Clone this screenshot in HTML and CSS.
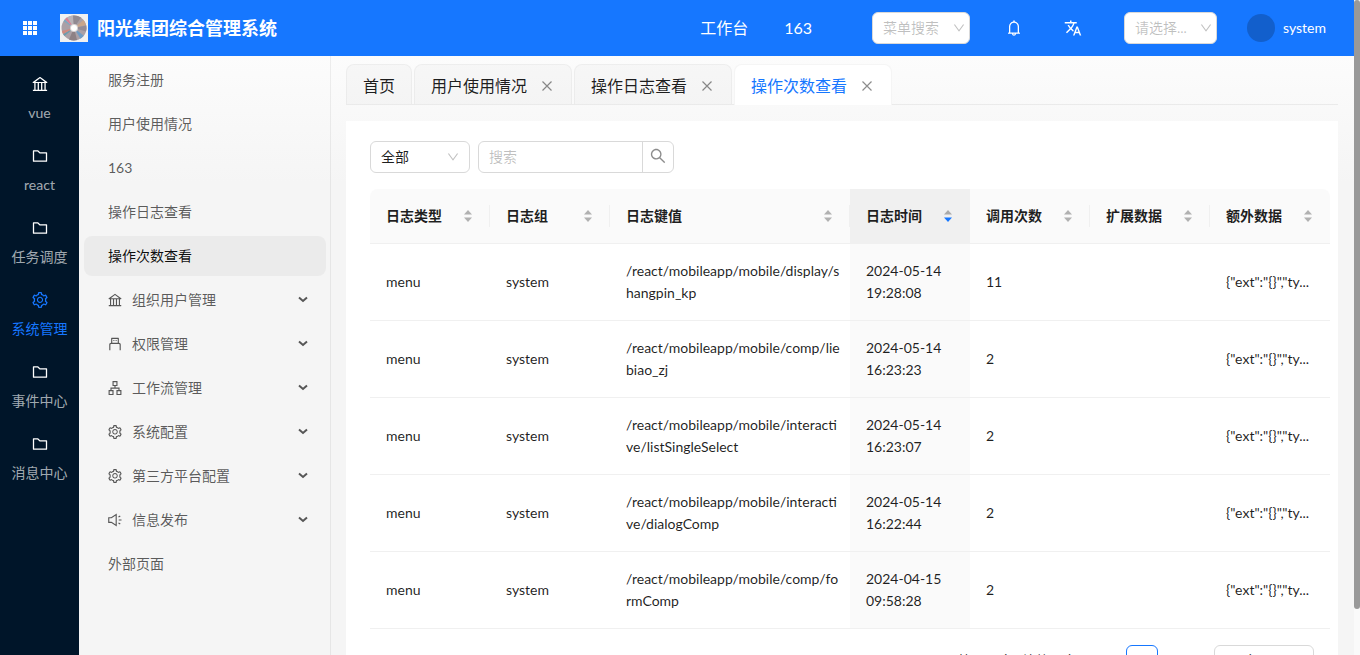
FILE: index.html
```html
<!DOCTYPE html>
<html lang="zh-CN">
<head>
    <meta charset="UTF-8">
    <meta name="viewport" content="width=device-width, initial-scale=1.0">
    <title>阳光集团综合管理系统</title>
    <link rel="stylesheet" href="styles.css">
</head>
<body>
    <svg class="sprite" aria-hidden="true">
        <symbol id="i-bank" viewBox="64 64 896 896"><path d="M894 462c30.9 0 43.8-39.7 18.7-58L530.8 126.2a31.81 31.81 0 00-37.6 0L111.3 404c-25.1 18.2-12.2 58 18.8 58H192v374h-72c-4.4 0-8 3.6-8 8v52c0 4.4 3.6 8 8 8h784c4.4 0 8-3.6 8-8v-52c0-4.4-3.6-8-8-8h-72V462h62zM512 196.7l271.1 197.2H240.9L512 196.7zM264 462h117v374H264V462zm189 0h117v374H453V462zm307 374H642V462h118v374z"/></symbol>
        <symbol id="i-folder" viewBox="64 64 896 896"><path d="M880 298.4H521L403.7 186.2a8.15 8.15 0 00-5.5-2.2H144c-17.7 0-32 14.3-32 32v592c0 17.7 14.3 32 32 32h736c17.7 0 32-14.3 32-32V330.4c0-17.7-14.3-32-32-32zM840 768H184V256h188.5l119.6 114.4H840V768z"/></symbol>
        <symbol id="i-setting" viewBox="64 64 896 896"><path d="M924.8 625.7l-65.5-56c3.1-19 4.7-38.4 4.7-57.8s-1.6-38.8-4.7-57.8l65.5-56a32.03 32.03 0 009.3-35.2l-.9-2.6a443.74 443.74 0 00-79.7-137.9l-1.8-2.1a32.12 32.12 0 00-35.1-9.5l-81.3 28.9c-30-24.6-63.5-44-99.7-57.6l-15.7-85a32.05 32.05 0 00-25.8-25.7l-2.7-.5c-52.1-9.4-106.9-9.4-159 0l-2.7.5a32.05 32.05 0 00-25.8 25.7l-15.8 85.4a351.86 351.86 0 00-99 57.4l-81.9-29.1a32 32 0 00-35.1 9.5l-1.8 2.1a446.02 446.02 0 00-79.7 137.9l-.9 2.6c-4.5 12.5-.8 26.5 9.3 35.2l66.3 56.6c-3.1 18.8-4.6 38-4.6 57.1 0 19.2 1.5 38.4 4.6 57.1L99 625.5a32.03 32.03 0 00-9.3 35.2l.9 2.6c18.1 50.4 44.9 96.9 79.7 137.9l1.8 2.1a32.12 32.12 0 0035.1 9.5l81.9-29.1c29.8 24.5 63.1 43.9 99 57.4l15.8 85.4a32.05 32.05 0 0025.8 25.7l2.7.5a449.4 449.4 0 00159 0l2.7-.5a32.05 32.05 0 0025.8-25.7l15.7-85a350 350 0 0099.7-57.6l81.3 28.9a32 32 0 0035.1-9.5l1.8-2.1c34.8-41.1 61.6-87.5 79.7-137.9l.9-2.6c4.5-12.3.8-26.3-9.3-35zM788.3 465.9c2.5 15.1 3.8 30.6 3.8 46.1s-1.3 31-3.8 46.1l-6.6 40.1 74.7 63.9a370.03 370.03 0 01-42.6 73.6L721 702.8l-31.4 25.8c-23.9 19.6-50.5 35-79.3 45.8l-38.1 14.3-17.9 97a377.5 377.5 0 01-85 0l-17.9-97.2-37.8-14.5c-28.5-10.8-55-26.2-78.7-45.7l-31.4-25.9-93.4 33.2c-17-22.9-31.2-47.6-42.6-73.6l75.5-64.5-6.5-40c-2.4-14.9-3.7-30.3-3.7-45.5 0-15.3 1.2-30.6 3.7-45.5l6.5-40-75.5-64.5c11.3-26.1 25.6-50.7 42.6-73.6l93.4 33.2 31.4-25.9c23.7-19.5 50.2-34.9 78.7-45.7l37.9-14.3 17.9-97.2c28.1-3.2 56.8-3.2 85 0l17.9 97 38.1 14.3c28.7 10.8 55.4 26.2 79.3 45.8l31.4 25.8 92.8-32.9c17 22.9 31.2 47.6 42.6 73.6L781.8 426l6.5 39.9zM512 326c-97.2 0-176 78.8-176 176s78.8 176 176 176 176-78.8 176-176-78.8-176-176-176zm79.2 255.2A111.6 111.6 0 01512 614c-29.9 0-58-11.7-79.2-32.8A111.6 111.6 0 01400 502c0-29.9 11.7-58 32.8-79.2C454 401.6 482.1 390 512 390c29.9 0 58 11.6 79.2 32.8A111.6 111.6 0 01624 502c0 29.9-11.7 58-32.8 79.2z"/></symbol>
        <symbol id="i-usb" viewBox="64 64 896 896"><path d="M760 432V144c0-17.700-14.300-32-32-32H296c-17.700 0-32 14.300-32 32v288c-66.200 0-120 52.100-120 116v356c0 4.400 3.600 8 8 8h56c4.400 0 8-3.600 8-8V548c0-24.300 21.600-44 48.100-44h495.800c26.500 0 48.100 19.700 48.100 44v356c0 4.400 3.600 8 8 8h56c4.400 0 8-3.600 8-8V548c0-63.900-53.800-116-120-116zM336 184h352v248H336zM408 256h64v56h-64zM552 256h64v56h-64z" fill-rule="evenodd"/></symbol>
        <symbol id="i-apartment" viewBox="64 64 896 896"><path d="M908 640H804V488c0-4.400-3.600-8-8-8H548v-96h108c8.800 0 16-7.200 16-16V80c0-8.800-7.200-16-16-16H368c-8.800 0-16 7.200-16 16v288c0 8.800 7.200 16 16 16h108v96H228c-4.400 0-8 3.600-8 8v152H116c-8.800 0-16 7.200-16 16v288c0 8.800 7.200 16 16 16h288c8.800 0 16-7.200 16-16V656c0-8.800-7.200-16-16-16H292v-88h440v88H620c-8.800 0-16 7.200-16 16v288c0 8.800 7.200 16 16 16h288c8.800 0 16-7.200 16-16V656c0-8.800-7.200-16-16-16zM424 312V136h176v176zM348 712v176H172V712zM852 888H676V712h176z" fill-rule="evenodd"/></symbol>
        <symbol id="i-sound" viewBox="64 64 896 896"><g fill="none" stroke="currentColor" stroke-width="72"><path d="M112 364h168l308-204v704L280 660H112z"/><path d="M752 512h176M736 318l112-66M736 706l112 66"/></g></symbol>
        <symbol id="i-down" viewBox="64 64 896 896"><path d="M884 256h-75c-5.100 0-9.900 2.500-12.900 6.600L512 654.200 227.900 262.600c-3-4.100-7.800-6.600-12.900-6.600h-75c-6.500 0-10.300 7.400-6.500 12.700l352.600 486.100c12.800 17.600 39 17.600 51.700 0l352.600-486.100c3.900-5.300.1-12.700-6.400-12.700z"/></symbol>
        <symbol id="i-arrow" viewBox="0 0 10 10"><path d="M1 2.500l4 3.500 4-3.500" fill="none" stroke="currentColor" stroke-width="2"/></symbol>
        <symbol id="i-close" viewBox="0 0 12 12"><path d="M1.500 1.500l9 9M10.500 1.500l-9 9" fill="none" stroke="currentColor" stroke-width="1.200"/></symbol>
        <symbol id="i-left" viewBox="0 0 12 12"><path d="M8.500 1.500L3.500 6l5 4.500" fill="none" stroke="currentColor"/></symbol>
        <symbol id="i-right" viewBox="0 0 12 12"><path d="M3.500 1.500l5 4.500-5 4.500" fill="none" stroke="currentColor"/></symbol>
        <symbol id="i-search" viewBox="64 64 896 896"><path d="M909.6 854.5L649.9 594.8C690.2 542.7 712 479 712 412c0-80.2-31.3-155.4-87.9-212.1-56.6-56.7-132-87.9-212.1-87.9s-155.5 31.3-212.1 87.9C143.2 256.5 112 331.8 112 412c0 80.1 31.3 155.5 87.9 212.1C256.5 680.8 331.8 712 412 712c67 0 130.6-21.8 182.7-62l259.7 259.6a8.2 8.2 0 0011.6 0l43.6-43.5a8.2 8.2 0 000-11.6zM570.4 570.4C528 612.7 471.8 636 412 636s-116-23.3-158.4-65.6C211.3 528 188 471.8 188 412s23.3-116.1 65.6-158.4C296 211.3 352.2 188 412 188s116.1 23.2 158.4 65.6S636 352.2 636 412s-23.3 116.1-65.6 158.4z"/></symbol>
        <symbol id="i-bell" viewBox="64 64 896 896"><path d="M816 768h-24V428c0-141.100-104.300-257.800-240-277.200V112c0-22.100-17.900-40-40-40s-40 17.900-40 40v38.800C336.300 170.200 232 286.900 232 428v340h-24c-17.700 0-32 14.300-32 32v32c0 4.400 3.600 8 8 8h216c0 61.800 50.200 112 112 112s112-50.200 112-112h216c4.400 0 8-3.600 8-8v-32c0-17.700-14.300-32-32-32zM512 888c-26.500 0-48-21.500-48-48h96c0 26.500-21.500 48-48 48zM304 768V428c0-55.600 21.600-107.800 60.900-147.100S456.400 220 512 220c55.600 0 107.800 21.600 147.100 60.900S720 372.400 720 428v340H304z"/></symbol>
        <symbol id="i-translate" viewBox="0 0 24 24"><path d="M12.870 15.070l-2.540-2.510.03-.03c1.740-1.940 2.980-4.170 3.710-6.530H17V4h-7V2H8v2H1v1.990h11.170C11.500 7.920 10.440 9.750 9 11.350 8.070 10.320 7.300 9.190 6.690 8h-2c.73 1.630 1.730 3.170 2.980 4.560l-5.090 5.020L4 19l5-5 3.110 3.110.76-2.040zM18.500 10h-2L12 22h2l1.120-3h4.750L21 22h2l-4.500-12zm-2.620 7l1.620-4.330L19.120 17h-3.240z"/></symbol>
        <symbol id="i-grid" viewBox="0 0 14 14"><path d="M0 0h4v4H0zM5 0h4v4H5zM10 0h4v4h-4zM0 5h4v4H0zM5 5h4v4H5zM10 5h4v4h-4zM0 10h4v4H0zM5 10h4v4H5zM10 10h4v4h-4z"/></symbol>
        <symbol id="i-sort" viewBox="0 0 12 14"><path class="sort-up" d="M2 5.500L6 1l4 4.500z"/><path class="sort-down" d="M2 8.500h8L6 13z"/></symbol>
    </svg>

    <div class="page">
        <div class="layout">
            <header class="header">
                <button class="icon-button" type="button" aria-label="应用"><svg class="icon icon-14"><use href="#i-grid"/></svg></button>
                <svg class="logo" viewBox="0 0 28 28">
                    <path fill="#f1f1f1" d="M0 0h28v28H0z"/>
                    <circle cx="14" cy="14" r="12.500" fill="#aaa0a6"/>
                    <path fill="#b9b3b8" d="M14 14L4 6.500A12.500 12.500 0 0 1 13 1.500z"/>
                    <path fill="#918a92" d="M14 14l-1-12.500a12.500 12.500 0 0 1 8 2z"/>
                    <path fill="#7fa8bf" d="M14 14L3.500 7.200A12.500 12.500 0 0 1 5 5.300z"/>
                    <path fill="#d97f95" d="M14 14L5 5.300A12.500 12.500 0 0 1 7 3.600z"/>
                    <path fill="#c9a58b" d="M14 14l9.500-8a12.500 12.500 0 0 1 2.500 5z"/>
                    <path fill="#948c96" d="M14 14l12.300-2.500a12.500 12.500 0 0 1-.3 6z"/>
                    <path fill="#6f9cc4" d="M14 14l9.800 7.800a12.500 12.500 0 0 1-3.300 2.900z"/>
                    <path fill="#8d8185" d="M14 14l3 12.100a12.500 12.500 0 0 1-8-.6z"/>
                    <path fill="#6b9cae" d="M14 14L4.500 22a12.500 12.500 0 0 1-1.400-2z"/>
                    <path fill="#d08a80" d="M14 14L3.100 20a12.500 12.500 0 0 1-1.200-3z"/>
                    <circle cx="14" cy="14" r="4" fill="#d8d4d4"/>
                    <circle cx="14" cy="14" r="3" fill="#fff"/>
                </svg>
                <h1 class="title">阳光集团综合管理系统</h1>
                <nav class="header-nav">
                    <a href="#">工作台</a>
                    <a href="#">163</a>
                </nav>
                <div class="select menu-search">
                    <select class="placeholder" aria-label="菜单搜索"><option>菜单搜索</option></select>
                    <svg class="icon select-arrow"><use href="#i-down"/></svg>
                </div>
                <button class="icon-button bell" type="button" aria-label="通知"><svg class="icon icon-16"><use href="#i-bell"/></svg></button>
                <button class="icon-button translate" type="button" aria-label="语言"><svg class="icon icon-18"><use href="#i-translate"/></svg></button>
                <div class="select role-select">
                    <select class="placeholder" aria-label="请选择"><option>请选择...</option></select>
                    <svg class="icon select-arrow"><use href="#i-down"/></svg>
                </div>
                <div class="user">
                    <span class="avatar"></span>
                    <span>system</span>
                </div>
            </header>

            <div class="body">
                <nav class="rail">
                    <a class="rail-item" href="#"><svg class="icon icon-16"><use href="#i-bank"/></svg><span>vue</span></a>
                    <a class="rail-item" href="#"><svg class="icon icon-16"><use href="#i-folder"/></svg><span>react</span></a>
                    <a class="rail-item" href="#"><svg class="icon icon-16"><use href="#i-folder"/></svg><span>任务调度</span></a>
                    <a class="rail-item active" href="#"><svg class="icon icon-16"><use href="#i-setting"/></svg><span>系统管理</span></a>
                    <a class="rail-item" href="#"><svg class="icon icon-16"><use href="#i-folder"/></svg><span>事件中心</span></a>
                    <a class="rail-item" href="#"><svg class="icon icon-16"><use href="#i-folder"/></svg><span>消息中心</span></a>
                </nav>

                <nav class="sidebar">
                    <a class="menu-item" href="#">服务注册</a>
                    <a class="menu-item" href="#">用户使用情况</a>
                    <a class="menu-item" href="#">163</a>
                    <a class="menu-item" href="#">操作日志查看</a>
                    <a class="menu-item active" href="#">操作次数查看</a>
                    <a class="menu-item" href="#"><svg class="icon icon-14"><use href="#i-bank"/></svg>组织用户管理<svg class="icon menu-arrow"><use href="#i-arrow"/></svg></a>
                    <a class="menu-item" href="#"><svg class="icon icon-14"><use href="#i-usb"/></svg>权限管理<svg class="icon menu-arrow"><use href="#i-arrow"/></svg></a>
                    <a class="menu-item" href="#"><svg class="icon icon-14"><use href="#i-apartment"/></svg>工作流管理<svg class="icon menu-arrow"><use href="#i-arrow"/></svg></a>
                    <a class="menu-item" href="#"><svg class="icon icon-14"><use href="#i-setting"/></svg>系统配置<svg class="icon menu-arrow"><use href="#i-arrow"/></svg></a>
                    <a class="menu-item" href="#"><svg class="icon icon-14"><use href="#i-setting"/></svg>第三方平台配置<svg class="icon menu-arrow"><use href="#i-arrow"/></svg></a>
                    <a class="menu-item" href="#"><svg class="icon icon-14"><use href="#i-sound"/></svg>信息发布<svg class="icon menu-arrow"><use href="#i-arrow"/></svg></a>
                    <a class="menu-item" href="#">外部页面</a>
                </nav>

                <main class="main">
                    <div class="tabs">
                        <div class="tab"><a href="#">首页</a></div>
                        <div class="tab"><a href="#">用户使用情况</a><button class="tab-close" type="button" aria-label="关闭"><svg class="icon"><use href="#i-close"/></svg></button></div>
                        <div class="tab"><a href="#">操作日志查看</a><button class="tab-close" type="button" aria-label="关闭"><svg class="icon"><use href="#i-close"/></svg></button></div>
                        <div class="tab active"><a href="#">操作次数查看</a><button class="tab-close" type="button" aria-label="关闭"><svg class="icon"><use href="#i-close"/></svg></button></div>
                    </div>

                    <section class="card">
                        <form class="toolbar">
                            <div class="select type-select">
                                <select aria-label="类型"><option>全部</option></select>
                                <svg class="icon select-arrow"><use href="#i-down"/></svg>
                            </div>
                            <div class="search">
                                <input type="text" placeholder="搜索" aria-label="搜索">
                                <button type="button" aria-label="搜索"><svg class="icon icon-16"><use href="#i-search"/></svg></button>
                            </div>
                        </form>

                        <table class="table">
                            <colgroup>
                                <col><col><col class="col-wide"><col><col><col><col>
                            </colgroup>
                            <thead>
                                <tr>
                                    <th><div class="th-inner">日志类型<svg class="icon sorter"><use href="#i-sort"/></svg></div></th>
                                    <th><div class="th-inner">日志组<svg class="icon sorter"><use href="#i-sort"/></svg></div></th>
                                    <th><div class="th-inner">日志键值<svg class="icon sorter"><use href="#i-sort"/></svg></div></th>
                                    <th class="sorted"><div class="th-inner">日志时间<svg class="icon sorter sorter-desc"><use href="#i-sort"/></svg></div></th>
                                    <th><div class="th-inner">调用次数<svg class="icon sorter"><use href="#i-sort"/></svg></div></th>
                                    <th><div class="th-inner">扩展数据<svg class="icon sorter"><use href="#i-sort"/></svg></div></th>
                                    <th><div class="th-inner">额外数据<svg class="icon sorter"><use href="#i-sort"/></svg></div></th>
                                </tr>
                            </thead>
                            <tbody>
                                <tr>
                                    <td>menu</td>
                                    <td>system</td>
                                    <td class="path">/react/mobileapp/mobile/display/shangpin_kp</td>
                                    <td class="sorted">2024-05-14 19:28:08</td>
                                    <td>11</td>
                                    <td></td>
                                    <td class="ellipsis">{"ext":"{}","ty...</td>
                                </tr>
                                <tr>
                                    <td>menu</td>
                                    <td>system</td>
                                    <td class="path">/react/mobileapp/mobile/comp/liebiao_zj</td>
                                    <td class="sorted">2024-05-14 16:23:23</td>
                                    <td>2</td>
                                    <td></td>
                                    <td class="ellipsis">{"ext":"{}","ty...</td>
                                </tr>
                                <tr>
                                    <td>menu</td>
                                    <td>system</td>
                                    <td class="path">/react/mobileapp/mobile/interactive/listSingleSelect</td>
                                    <td class="sorted">2024-05-14 16:23:07</td>
                                    <td>2</td>
                                    <td></td>
                                    <td class="ellipsis">{"ext":"{}","ty...</td>
                                </tr>
                                <tr>
                                    <td>menu</td>
                                    <td>system</td>
                                    <td class="path">/react/mobileapp/mobile/interactive/dialogComp</td>
                                    <td class="sorted">2024-05-14 16:22:44</td>
                                    <td>2</td>
                                    <td></td>
                                    <td class="ellipsis">{"ext":"{}","ty...</td>
                                </tr>
                                <tr>
                                    <td>menu</td>
                                    <td>system</td>
                                    <td class="path">/react/mobileapp/mobile/comp/formComp</td>
                                    <td class="sorted">2024-04-15 09:58:28</td>
                                    <td>2</td>
                                    <td></td>
                                    <td class="ellipsis">{"ext":"{}","ty...</td>
                                </tr>
                            </tbody>
                        </table>

                        <div class="pagination">
                            <span class="total">第 1-5 条/总共 5 条</span>
                            <button class="page-button" type="button" aria-label="上一页"><svg class="icon"><use href="#i-left"/></svg></button>
                            <button class="page-button current" type="button">1</button>
                            <button class="page-button" type="button" aria-label="下一页"><svg class="icon"><use href="#i-right"/></svg></button>
                            <div class="select size-select">
                                <select aria-label="每页条数"><option>20 条/页</option></select>
                            </div>
                        </div>
                    </section>
                </main>
            </div>
        </div>
        <div class="scrollbar"><div class="scrollbar-thumb"></div></div>
    </div>
</body>
</html>
```
FILE: styles.css
```css
* {
    margin: 0;
    padding: 0;
    box-sizing: border-box;
}

body {
    font-family: Lato, "Noto Sans CJK SC", sans-serif;
    font-size: 14px;
    line-height: 22px;
    color: rgba(0, 0, 0, 0.88);
    background: linear-gradient(#fff, #f5f5f5 28%);
}

a {
    color: inherit;
    text-decoration: none;
}

button,
input,
select {
    font: inherit;
    color: inherit;
    border: none;
    background: none;
    outline: none;
}

.sprite {
    position: absolute;
    width: 0;
    height: 0;
}

.icon {
    display: block;
    flex: none;
    width: 12px;
    height: 12px;
    fill: currentColor;
}

.icon-14 {
    width: 14px;
    height: 14px;
}

.icon-16 {
    width: 16px;
    height: 16px;
}

.icon-18 {
    width: 18px;
    height: 18px;
}

.page {
    display: flex;
    height: 100vh;
    overflow: hidden;
}

.layout {
    flex: 1;
    min-width: 0;
    display: flex;
    flex-direction: column;
}

.scrollbar {
    flex: none;
    width: 6px;
    background: #fafafa;
}

.scrollbar-thumb {
    height: 93%;
    border-radius: 3px;
    background: #999;
}

/* header */
.header {
    flex: none;
    display: flex;
    align-items: center;
    height: 56px;
    padding: 0 28px 0 23px;
    background: #1677ff;
    color: #fff;
}

.icon-button {
    display: flex;
}

.logo {
    width: 28px;
    height: 28px;
    margin: 0 9px 0 23px;
}

.title {
    flex: 1;
    font-size: 18px;
    font-weight: 700;
    line-height: 28px;
}

.header-nav {
    display: flex;
    gap: 36px;
    margin-right: 60px;
    font-size: 16px;
}

.select {
    position: relative;
    height: 32px;
}

.select select {
    width: 100%;
    height: 100%;
    padding: 0 11px 0 10px;
    border: 1px solid #d9d9d9;
    border-radius: 6px;
    background: #fff;
    color: rgba(0, 0, 0, 0.88);
    appearance: none;
}

.select .placeholder {
    color: rgba(0, 0, 0, 0.25);
}

.select-arrow {
    position: absolute;
    top: 10px;
    right: 11px;
    color: rgba(0, 0, 0, 0.25);
    pointer-events: none;
}

.header .select-arrow {
    right: 5px;
}

.menu-search {
    width: 98px;
}

.bell {
    margin-left: 36px;
}

.translate {
    margin: 0 42px;
}

.role-select {
    width: 93px;
}

.user {
    display: flex;
    align-items: center;
    gap: 8px;
    margin-left: 30px;
}

.avatar {
    width: 28px;
    height: 28px;
    border-radius: 50%;
    background: #125fcc;
}

/* left navigation */
.body {
    flex: 1;
    display: flex;
    min-height: 0;
}

.rail {
    flex: none;
    width: 79px;
    padding-top: 20px;
    background: #001529;
}

.rail-item {
    display: flex;
    flex-direction: column;
    align-items: center;
    gap: 10px;
    height: 72px;
    color: rgba(255, 255, 255, 0.65);
}

.rail-item .icon {
    color: #fff;
}

.rail-item.active,
.rail-item.active .icon {
    color: #1677ff;
}

.sidebar {
    flex: none;
    display: flex;
    flex-direction: column;
    gap: 4px;
    width: 252px;
    padding: 4px 4px 0 5px;
    border-right: 1px solid rgba(5, 5, 5, 0.06);
}

.menu-item {
    flex: none;
    display: flex;
    align-items: center;
    gap: 10px;
    height: 40px;
    padding: 0 18px 0 24px;
    border-radius: 8px;
    color: rgba(0, 0, 0, 0.65);
}

.menu-item.active {
    background: rgba(0, 0, 0, 0.04);
    color: rgba(0, 0, 0, 0.95);
}

.menu-arrow {
    width: 10px;
    height: 10px;
    margin-left: auto;
}

/* page tabs */
.main {
    flex: 1;
    min-width: 0;
    padding: 8px 16px 0 15px;
    overflow: hidden;
}

.tabs {
    display: flex;
    gap: 2px;
    height: 41px;
    margin-bottom: 16px;
    border-bottom: 1px solid rgba(5, 5, 5, 0.06);
    font-size: 16px;
}

.tab {
    display: flex;
    align-items: center;
    padding: 2px 16px 0;
    border: 1px solid rgba(5, 5, 5, 0.04);
    border-bottom: none;
    border-radius: 8px 8px 0 0;
    background: rgba(0, 0, 0, 0.02);
}

.tab.active {
    height: 41px;
    background: #fff;
    color: #1677ff;
}

.tab-close {
    display: flex;
    justify-content: center;
    width: 24px;
    margin: 0 -4px 0 8px;
    color: rgba(0, 0, 0, 0.45);
}

/* content */
.card {
    padding: 20px 8px 24px 24px;
    background: #fff;
}

.toolbar {
    display: flex;
    gap: 8px;
    margin-bottom: 16px;
}

.type-select {
    width: 100px;
}

.search {
    display: flex;
    width: 196px;
    height: 32px;
    border: 1px solid #d9d9d9;
    border-radius: 6px;
}

.search input {
    flex: 1;
    min-width: 0;
    padding: 0 11px 0 10px;
}

.search input::placeholder {
    color: rgba(0, 0, 0, 0.25);
}

.search button {
    display: flex;
    justify-content: center;
    width: 31px;
    padding-top: 6px;
    border-left: 1px solid #d9d9d9;
    color: rgba(0, 0, 0, 0.45);
}

.table {
    width: 100%;
    table-layout: fixed;
    border-collapse: separate;
    border-spacing: 0;
}

.col-wide {
    width: 25%;
}

.table th,
.table td {
    padding: 16px;
    border-bottom: 1px solid #f0f0f0;
    text-align: left;
}

.table .path {
    padding-right: 8px;
    word-break: break-all;
}

.table th {
    position: relative;
    background: #fafafa;
    font-weight: 600;
}

.table th:first-child {
    border-top-left-radius: 8px;
}

.table th:last-child {
    border-top-right-radius: 8px;
}

.table th:not(:last-child)::after {
    content: '';
    position: absolute;
    top: 16px;
    right: 0;
    width: 1px;
    height: 22px;
    background: #f0f0f0;
}

.table th.sorted {
    background: #f0f0f0;
}

.table td.sorted {
    background: #fafafa;
}

.th-inner {
    display: flex;
    align-items: center;
    justify-content: space-between;
}

.sorter {
    height: 14px;
    color: rgba(0, 0, 0, 0.29);
}

.sorter-desc {
    --sort-down: #1677ff;
}

.sort-down {
    fill: var(--sort-down, currentColor);
}

.table .ellipsis {
    overflow: hidden;
    white-space: nowrap;
    text-overflow: ellipsis;
}

.pagination {
    display: flex;
    align-items: center;
    justify-content: flex-end;
    gap: 8px;
    padding: 16px 16px 0 0;
}

.page-button {
    display: flex;
    align-items: center;
    justify-content: center;
    width: 32px;
    height: 32px;
    border-radius: 6px;
}

.page-button.current {
    border: 1px solid #1677ff;
    color: #1677ff;
    font-weight: 600;
}

.size-select {
    width: 100px;
    margin-left: 8px;
}
```
